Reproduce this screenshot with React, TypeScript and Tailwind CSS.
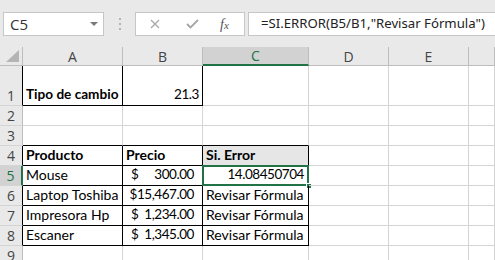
import React from "react";

const G = "border-r-[#d4d4d4]";
const GB = "border-b-[#d4d4d4]";

type CellDef = {
  text?: React.ReactNode;
  r?: boolean;
  b?: boolean;
  cls?: string;
};

function Cell({ c }: { c: CellDef }) {
  return (
    <div
      className={`relative flex items-end overflow-visible whitespace-nowrap border-r border-b pb-[2px] leading-[17px] text-[14px] text-black ${
        c.r ? "border-r-black" : G
      } ${c.b ? "border-b-black" : GB} ${c.cls ?? ""}`}
      style={{ fontFamily: "Lato, 'Liberation Sans', sans-serif" }}
    >
      {c.text}
    </div>
  );
}

function RowHead({ n, black, sel }: { n: number; black?: boolean; sel?: boolean }) {
  return (
    <div
      className={`flex items-end justify-center border-b pb-[1px] text-[14px] leading-[17px] ${
        sel ? "bg-[#d2d2d2] border-r-2 border-r-[#217346] text-[#217346]" : "bg-[#e9e9e9] border-r text-[#444]"
      } ${!sel && black ? "border-r-black" : !sel ? "border-r-[#bdbdbd]" : ""} border-b-[#d4d4d4]`}
      style={{ fontFamily: "'Open Sans', 'Noto Sans', sans-serif" }}
    >
      {n}
    </div>
  );
}

function ColHead({ l, sel }: { l: string; sel?: boolean }) {
  return (
    <div
      className={`flex items-center justify-center border-r text-[14px] ${
        sel
          ? "bg-[#d2d2d2] border-b-2 border-b-[#217346] text-[#217346] border-r-[#bdbdbd]"
          : "bg-[#e9e9e9] border-b border-b-[#bdbdbd] border-r-[#bdbdbd] text-[#444]"
      }`}
      style={{ fontFamily: "'Open Sans', 'Noto Sans', sans-serif" }}
    >
      {l}
    </div>
  );
}

const Num = ({ children, cls }: { children: React.ReactNode; cls?: string }) => (
  <span className={`text-[13.5px] tracking-[-0.45px] ${cls ?? ""}`}>{children}</span>
);

const Acc = ({ v }: { v: string }) => (
  <div className="flex w-full justify-between pl-[8px] pr-[8px]">
    <Num>$</Num>
    <Num>{v}</Num>
  </div>
);

export default function App() {
  const empty: CellDef = {};
  const rev = <span className="pl-[3px]">Revisar Fórmula</span>;
  const rows: { n: number; cells: CellDef[]; black?: boolean; sel?: boolean }[] = [
    {
      n: 1,
      black: true,
      cells: [
        { text: <span className="pl-[3px] text-[13.6px] font-bold">Tipo de cambio</span>, r: true, b: true },
        { text: <Num cls="w-full pr-[3px] text-right">21.3</Num>, r: true, b: true },
        empty,
        empty,
        empty,
        empty,
      ],
    },
    { n: 2, cells: [empty, empty, empty, empty, empty, empty] },
    { n: 3, cells: [{ b: true }, { b: true }, { b: true }, empty, empty, empty] },
    {
      n: 4,
      black: true,
      cells: [
        { text: <span className="pl-[3px] font-bold">Producto</span>, r: true, b: true },
        { text: <span className="pl-[3px] font-bold">Precio</span>, r: true, b: true },
        { text: <span className="pl-[3px] font-bold">Si. Error</span>, r: true, b: true, cls: "bg-[#e7e6e6]" },
        empty,
        empty,
        empty,
      ],
    },
    {
      n: 5,
      sel: true,
      cells: [
        { text: <span className="pl-[3px]">Mouse</span>, r: true, b: true },
        { text: <Acc v="300.00" />, r: true, b: true },
        {
          text: (
            <>
              <Num cls="w-full pr-[4px] text-right">14.08450704</Num>
              <div className="pointer-events-none absolute -left-[1px] -top-[1px] bottom-[-1px] right-[-1px] border-2 border-[#217346]" />
              <div className="absolute -bottom-[4px] -right-[4px] h-[6px] w-[6px] border border-white bg-[#217346]" />
            </>
          ),
          r: true,
          b: true,
        },
        empty,
        empty,
        empty,
      ],
    },
    {
      n: 6,
      black: true,
      cells: [
        { text: <span className="pl-[3px]">Laptop Toshiba</span>, r: true, b: true },
        { text: <Num cls="w-full pr-[8px] text-right">$15,467.00</Num>, r: true, b: true },
        { text: rev, r: true, b: true },
        empty,
        empty,
        empty,
      ],
    },
    {
      n: 7,
      black: true,
      cells: [
        { text: <span className="pl-[3px]">Impresora Hp</span>, r: true, b: true },
        { text: <Acc v="1,234.00" />, r: true, b: true },
        { text: rev, r: true, b: true },
        empty,
        empty,
        empty,
      ],
    },
    {
      n: 8,
      black: true,
      cells: [
        { text: <span className="pl-[3px]">Escaner</span>, r: true, b: true },
        { text: <Acc v="1,345.00" />, r: true, b: true },
        { text: rev, r: true, b: true },
        empty,
        empty,
        empty,
      ],
    },
    { n: 9, cells: [empty, empty, empty, empty, empty, empty] },
  ];

  return (
    <div className="h-[260px] w-[495px] overflow-hidden bg-white">
      <div className="flex h-[47px] items-start bg-[#e9e9e9] pt-[12px]">
        <div className="ml-[3px] flex h-[24px] w-[101px] items-center justify-between border border-[#c6c6c6] bg-white pl-[6px] pr-[5px]">
          <span className="text-[15px] text-[#333]" style={{ fontFamily: "'Open Sans', 'Noto Sans', sans-serif" }}>
            C5
          </span>
          <svg width="8" height="4" viewBox="0 0 8 4">
            <path d="M0 0 L8 0 L4 4 Z" fill="#7a7a7a" />
          </svg>
        </div>
        <div className="flex w-[31px] flex-col items-center gap-[3px] pt-[6px]">
          <div className="h-[2px] w-[2px] bg-[#b4b4b4]" />
          <div className="h-[2px] w-[2px] bg-[#b4b4b4]" />
          <div className="h-[2px] w-[2px] bg-[#b4b4b4]" />
        </div>
        <div className="flex h-[24px] w-[110px] items-center border border-[#c6c6c6] bg-white">
          <svg className="ml-[14px]" width="10" height="10" viewBox="0 0 10 10">
            <path d="M1 1 L9 9 M9 1 L1 9" stroke="#a6a6a6" strokeWidth="1.3" />
          </svg>
          <svg className="ml-[26px]" width="13" height="10" viewBox="0 0 13 10">
            <path d="M1 5 L4.5 8.5 L12 1" stroke="#a6a6a6" strokeWidth="1.8" fill="none" />
          </svg>
          <span
            className="ml-[21px] text-[14px] italic text-[#555]"
            style={{ fontFamily: "'Liberation Serif', serif" }}
          >
            f<span className="text-[11px]">x</span>
          </span>
        </div>
        <div className="ml-[3px] flex h-[24px] flex-1 items-center border border-r-0 border-[#c6c6c6] bg-white pl-[12px]">
          <span
            className="whitespace-nowrap text-[13.2px] text-[#222]"
            style={{ fontFamily: "'Noto Sans', 'Open Sans', sans-serif" }}
          >
            =SI.ERROR(B5/B1,"Revisar Fórmula")
          </span>
        </div>
      </div>

      <div className="grid grid-cols-[23px_100px_80px_106px_80px_80px_1fr] grid-rows-[19px_40px_repeat(8,20px)]">
        <div className="relative border-r border-b border-r-[#bdbdbd] border-b-[#bdbdbd] bg-[#e9e9e9]">
          <svg className="absolute bottom-[3px] right-[3px]" width="13" height="12" viewBox="0 0 13 12">
            <path d="M13 0 L13 12 L0 12 Z" fill="#b4b4b4" />
          </svg>
        </div>
        <ColHead l="A" />
        <ColHead l="B" />
        <ColHead l="C" sel />
        <ColHead l="D" />
        <ColHead l="E" />
        <ColHead l="" />
        {rows.map((row) => (
          <React.Fragment key={row.n}>
            <RowHead n={row.n} black={row.black} sel={row.sel} />
            {row.cells.map((c, i) => (
              <Cell key={i} c={c} />
            ))}
          </React.Fragment>
        ))}
      </div>
    </div>
  );
}
